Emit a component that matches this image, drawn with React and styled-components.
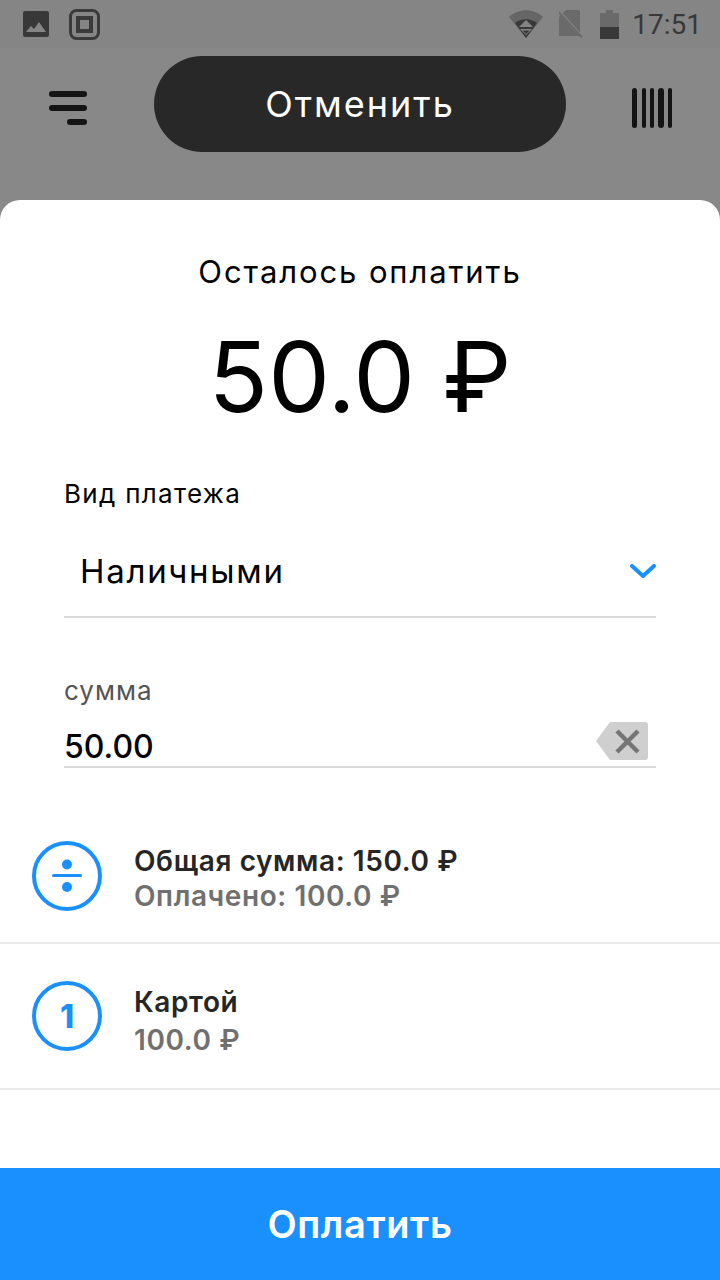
import React from 'react';
import styled, { createGlobalStyle } from 'styled-components';

const GlobalStyle = createGlobalStyle`
    html, body {
        margin: 0;
        padding: 0;
        background: #888888;
    }
    * {
        box-sizing: border-box;
    }
`;

const Page = styled.div`
    width: 720px;
    height: 1280px;
    display: flex;
    flex-direction: column;
    overflow: hidden;
    background: #888888;
    font-family: Inter, "Noto Sans", sans-serif;
    color: #000;
`;

const StatusBar = styled.div`
    height: 48px;
    flex: none;
    background: #858585;
    display: flex;
    align-items: center;
    padding: 0 17px 0 23px;
    gap: 20px;
`;

const StatusSpacer = styled.div`
    flex: 1;
`;

const StatusIcons = styled.div`
    display: flex;
    align-items: center;
    gap: 16px;
`;

const StatusTime = styled.span`
    font-family: Roboto, sans-serif;
    font-size: 28px;
    color: #383838;
    margin-left: -3px;
    margin-right: 1px;
`;

const Header = styled.div`
    height: 152px;
    flex: none;
    display: flex;
    justify-content: space-between;
    padding: 8px 48px 0;
`;

const IconSlot = styled.div`
    height: 104px;
    display: flex;
    align-items: center;
    justify-content: center;
`;

const CancelButton = styled.div`
    width: 412px;
    height: 96px;
    border-radius: 48px;
    background: #282828;
    color: #fff;
    font-size: 36px;
    letter-spacing: 2px;
    display: flex;
    align-items: center;
    justify-content: center;
`;

const Sheet = styled.div`
    flex: 1;
    background: #fff;
    border-radius: 20px 20px 0 0;
    display: flex;
    flex-direction: column;
`;

const RemainLabel = styled.div`
    margin-top: 52px;
    text-align: center;
    font-size: 31px;
    line-height: 40px;
    letter-spacing: 1.9px;
`;

const RemainAmount = styled.div`
    margin-top: 27px;
    text-align: center;
    font-size: 98px;
    line-height: 116px;
    font-weight: 400;
`;

const Form = styled.div`
    margin-top: 43px;
    padding: 0 64px;
`;

const FieldLabel = styled.div`
    font-size: 26px;
    line-height: 32px;
    letter-spacing: ${(p) => p.$spacing || 1.3}px;
    color: ${(p) => p.$color || '#000'};
`;

const SelectRow = styled.div`
    height: 82px;
    margin-top: 26px;
    padding: 0 0 10px 16px;
    display: flex;
    align-items: center;
    justify-content: space-between;
    border-bottom: 2px solid #d9d9d9;
    font-size: 33px;
    letter-spacing: 1.7px;
`;

const AmountRow = styled.div`
    height: 46px;
    margin-top: 15px;
    padding-top: 4px;
    display: flex;
    align-items: center;
    justify-content: space-between;
    border-bottom: 2px solid #d9d9d9;
    font-size: 32px;
    font-weight: 500;

    svg {
        margin-right: 8px;
        margin-bottom: 10px;
    }
`;

const SumBlock = styled.div`
    margin-top: 57px;
`;

const InfoList = styled.div`
    margin-top: 42px;
    flex: 1;
`;

const InfoRow = styled.div`
    height: ${(p) => p.$height}px;
    padding: 0 32px;
    display: flex;
    align-items: center;
    gap: 32px;
    border-bottom: 2px solid #e9e9e9;
`;

const Circle = styled.div`
    width: 70px;
    height: 70px;
    flex: none;
    border: 4px solid #1a90ff;
    border-radius: 50%;
    color: #1a90ff;
    font-size: 32px;
    font-weight: 800;
    display: flex;
    align-items: center;
    justify-content: center;
`;

const InfoText = styled.div`
    display: flex;
    flex-direction: column;
    gap: ${(p) => p.$gap}px;
    margin-top: ${(p) => p.$offset}px;
`;

const InfoTitle = styled.div`
    font-size: 28px;
    line-height: 34px;
    font-weight: 600;
    letter-spacing: 0.6px;
    color: #262626;
`;

const InfoSub = styled.div`
    font-size: 28px;
    line-height: 34px;
    font-weight: 600;
    letter-spacing: 0.6px;
    color: #707070;
`;

const PayButton = styled.div`
    height: 112px;
    flex: none;
    background: #1a90ff;
    color: #fff;
    font-size: 38px;
    font-weight: 600;
    letter-spacing: 0.6px;
    display: flex;
    align-items: center;
    justify-content: center;
`;

const ImageIcon = () => (
    <svg width="26" height="26" viewBox="0 0 26 26">
        <rect width="26" height="26" rx="2" fill="#383838" />
        <path d="M3 21l5-6 3 3 5-7 7 10z" fill="#858585" />
    </svg>
);

const FrameIcon = () => (
    <svg width="31" height="31" viewBox="0 0 31 31" fill="none" stroke="#3a3a3a">
        <rect x="1.500" y="1.500" width="28" height="28" rx="6" strokeWidth="3" />
        <rect x="9" y="9" width="13" height="13" strokeWidth="4" />
    </svg>
);

const WifiIcon = () => (
    <svg width="34" height="28" viewBox="0 0 34 28">
        <path d="M0 7C9-2 25-2 34 7L17 28z" fill="#666" />
        <path d="M6 13L17 28 28 13C21 8 13 8 6 13z" fill="#383838" />
        <path d="M17 10l7 7H10z" fill="#858585" />
        <path d="M11 19h12l-6 6z" fill="#858585" />
        <path d="M13.500 20.500h7l-3.500 3.500z" fill="#383838" />
    </svg>
);

const NoSimIcon = () => (
    <svg width="25" height="28" viewBox="0 0 25 28">
        <path d="M7 0h12a2 2 0 0 1 2 2v24H0V7z" fill="#6a6a6a" />
        <path d="M-1 0l24 27" stroke="#858585" strokeWidth="3" />
        <path d="M-1 1.500l24 26" stroke="#6a6a6a" strokeWidth="2" />
    </svg>
);

const BatteryIcon = () => (
    <svg width="19" height="29" viewBox="0 0 19 29">
        <path d="M6 0h7v3h6v26H0V3h6z" fill="#6a6a6a" />
        <rect y="17" width="19" height="12" fill="#383838" />
    </svg>
);

const MenuIcon = () => (
    <svg width="40" height="34" viewBox="0 0 40 34" fill="none" stroke="#141414" strokeWidth="6" strokeLinecap="round">
        <path d="M4 3h32" />
        <path d="M4 17h32" />
        <path d="M22 31h14" />
    </svg>
);

const BarcodeIcon = () => (
    <svg width="40" height="40" viewBox="0 0 40 40" fill="#141414">
        <rect x="0" y="0" width="5" height="40" rx="2.500" />
        <rect x="10" y="0" width="4" height="40" rx="2" />
        <rect x="18" y="0" width="4" height="40" rx="2" />
        <rect x="26" y="0" width="6" height="40" rx="3" />
        <rect x="36" y="0" width="4" height="40" rx="2" />
    </svg>
);

const ChevronIcon = () => (
    <svg width="26" height="15" viewBox="0 0 26 15" fill="none" stroke="#1a90ff" strokeWidth="4" strokeLinecap="round" strokeLinejoin="round">
        <path d="M2 2l11 10L24 2" />
    </svg>
);

const BackspaceIcon = () => (
    <svg width="52" height="38" viewBox="0 0 52 38">
        <path d="M14 0h35a3 3 0 0 1 3 3v32a3 3 0 0 1-3 3H14L0 19z" fill="#cfcfcf" />
        <path d="M21 9l21 21M42 9L21 30" stroke="#757575" strokeWidth="4.500" />
    </svg>
);

const DivideIcon = () => (
    <svg width="30" height="36" viewBox="0 0 30 36" fill="#1a90ff">
        <circle cx="15" cy="6.500" r="5" />
        <rect x="0" y="16" width="30" height="3" rx="1.500" />
        <circle cx="15" cy="29" r="5" />
    </svg>
);

const App = () => (
    <Page>
        <GlobalStyle />
        <StatusBar>
            <ImageIcon />
            <FrameIcon />
            <StatusSpacer />
            <StatusIcons>
                <WifiIcon />
                <NoSimIcon />
                <BatteryIcon />
                <StatusTime>17:51</StatusTime>
            </StatusIcons>
        </StatusBar>
        <Header>
            <IconSlot>
                <MenuIcon />
            </IconSlot>
            <CancelButton>Отменить</CancelButton>
            <IconSlot>
                <BarcodeIcon />
            </IconSlot>
        </Header>
        <Sheet>
            <RemainLabel>Осталось оплатить</RemainLabel>
            <RemainAmount>50.0 ₽</RemainAmount>
            <Form>
                <FieldLabel>Вид платежа</FieldLabel>
                <SelectRow>
                    Наличными
                    <ChevronIcon />
                </SelectRow>
                <SumBlock>
                    <FieldLabel $color="#555555" $spacing={1}>сумма</FieldLabel>
                    <AmountRow>
                        50.00
                        <BackspaceIcon />
                    </AmountRow>
                </SumBlock>
            </Form>
            <InfoList>
                <InfoRow $height={134}>
                    <Circle>
                        <DivideIcon />
                    </Circle>
                    <InfoText $gap={1} $offset={4}>
                        <InfoTitle>Общая сумма: 150.0 ₽</InfoTitle>
                        <InfoSub>Оплачено: 100.0 ₽</InfoSub>
                    </InfoText>
                </InfoRow>
                <InfoRow $height={146}>
                    <Circle>1</Circle>
                    <InfoText $gap={4} $offset={10}>
                        <InfoTitle>Картой</InfoTitle>
                        <InfoSub>100.0 ₽</InfoSub>
                    </InfoText>
                </InfoRow>
            </InfoList>
            <PayButton>Оплатить</PayButton>
        </Sheet>
    </Page>
);

export default App;
